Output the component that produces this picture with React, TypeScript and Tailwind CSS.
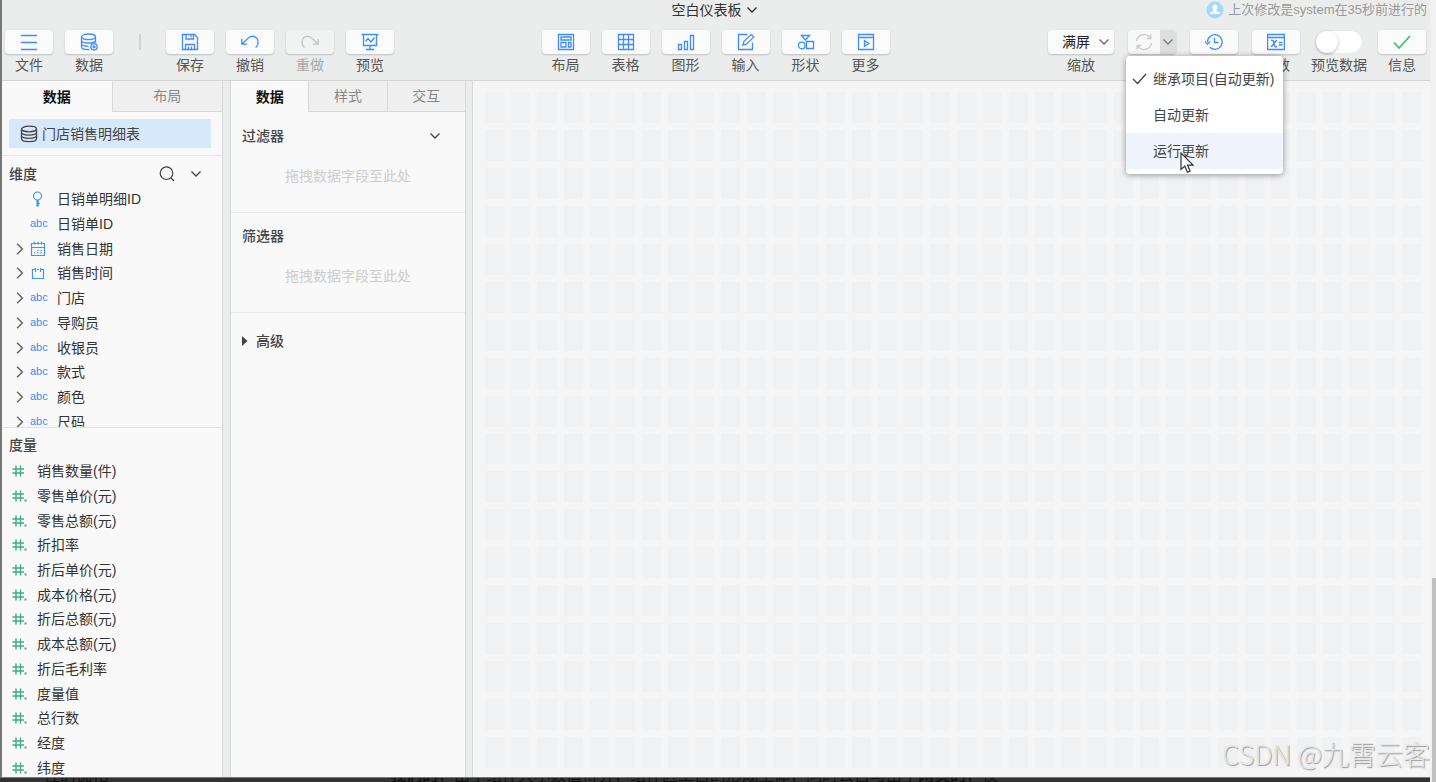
import React from 'react';

const DIMENSIONS = [
    { name: '日销单明细ID', type: 'key', expandable: false },
    { name: '日销单ID', type: 'text', expandable: false },
    { name: '销售日期', type: 'date', expandable: true },
    { name: '销售时间', type: 'time', expandable: true },
    { name: '门店', type: 'text', expandable: true },
    { name: '导购员', type: 'text', expandable: true },
    { name: '收银员', type: 'text', expandable: true },
    { name: '款式', type: 'text', expandable: true },
    { name: '颜色', type: 'text', expandable: true },
    { name: '尺码', type: 'text', expandable: true },
];

const MEASURES = [
    { name: '销售数量(件)', decimal: false },
    { name: '零售单价(元)', decimal: true },
    { name: '零售总额(元)', decimal: true },
    { name: '折扣率', decimal: true },
    { name: '折后单价(元)', decimal: true },
    { name: '成本价格(元)', decimal: true },
    { name: '折后总额(元)', decimal: true },
    { name: '成本总额(元)', decimal: true },
    { name: '折后毛利率', decimal: true },
    { name: '度量值', decimal: true },
    { name: '总行数', decimal: true },
    { name: '经度', decimal: true },
    { name: '纬度', decimal: true },
];

const GRID_CELLS = Array.from({ length: 36 * 18 }, (_, i) => i);

// 18px line icons for the toolbar
const Icon = ({ children, className = 'text-[#3f8cff]' }: { children: React.ReactNode, className?: string }) => (
    <svg viewBox="0 0 18 18" className={`w-[18px] h-[18px] shrink-0 ${className}`} fill="none" stroke="currentColor" strokeWidth="1.3" aria-hidden="true">
        {children}
    </svg>
);

const MenuIcon = () => <Icon><path d="M1 2.5h16M1 9.5h16M1 16.5h16" /></Icon>;

const DataSettingIcon = () => (
    <Icon>
        <ellipse cx="8.5" cy="3.8" rx="7" ry="2.8" />
        <path d="M1.5 3.8v10c0 1.6 3 2.9 7 2.9h1M15.5 3.8v6M1.5 7.2c0 1.6 3 2.8 7 2.8s7-1.2 7-2.8M1.5 10.6c0 1.6 3 2.8 7 2.8" />
        <circle cx="14" cy="13.8" r="3.2" />
        <circle cx="14" cy="13.8" r="1" />
    </Icon>
);

const SaveIcon = () => (
    <Icon>
        <path d="M1.5 1.5h12l3 3v12h-15zM5 1.5v4.5h7.5V1.5M10 2.5v2M4.5 16.5v-5h9v5M7.5 13.5v3M10.5 13.5v3" />
    </Icon>
);

const UndoIcon = () => <Icon><path d="M.8 6v5.2h5.4M1 11 7.5 4.9a6 6 0 0 1 7.5-.3c2.8 2.3 2.8 6.8-.3 10" /></Icon>;

const RedoIcon = () => (
    <Icon className="text-[#c4c4c4]">
        <path d="M17.2 6v5.2h-5.4M17 11 10.5 4.9A6 6 0 0 0 3 4.6C.2 6.9.2 11.4 3.3 14.6" />
    </Icon>
);

const PreviewIcon = () => (
    <Icon><path d="M.5 1.5h17M2.5 1.5v11h13v-11M9 12.5v4M5 16.5h8M4.5 8.5 7 5.5l3 3.5 3.5-4.5" /></Icon>
);

const LayoutIcon = () => (
    <Icon><path d="M1.5 1.5h15v15h-15zM4 4h10v3H4zM4 9.5h5v4.5H4zM11.5 9.5H14V14h-2.5z" /></Icon>
);

const TableIcon = () => <Icon><path d="M1.5 1.5h15v15h-15zM1.5 6.5h15M1.5 11.5h15M6.5 1.5v15M11.5 1.5v15" /></Icon>;

const ChartIcon = () => <Icon><path d="M1.5 11.5h3v5h-3zM7.5 8.5h3v8h-3zM13.5 2.5h3v14h-3z" /></Icon>;

const InputIcon = () => (
    <Icon>
        <path d="M10.5 1.5h-9v15h14v-7" />
        <path d="m6 12 .8-3.4 7.4-7 2.5 2.5-7.4 7z" />
    </Icon>
);

const ShapeIcon = () => (
    <Icon>
        <path d="M4.5 2.5h8L8.500 7zM9.5 8.5h7v7h-7z" />
        <circle cx="4.8" cy="12.5" r="3.3" />
    </Icon>
);

const MoreIcon = () => <Icon><path d="M1.5 1.5h15v15h-15zM1.5 4.5h15M7.5 7.8v5.4l4.3-2.7z" /></Icon>;

const RefreshIcon = () => (
    <Icon className="text-[#c9c9c9]">
        <path d="M1.5 8a7.5 7.5 0 0 1 13.7-3M16.5 10a7.5 7.5 0 0 1-13.7 3M15.8 1.5v4h-4M2.2 16.5v-4h4" />
    </Icon>
);

const HistoryIcon = () => (
    <Icon>
        <path d="M2.5 9a7.3 7.3 0 1 1 2.3 5.3M0 8.5l2.6 2.5L5.2 8.5M9.5 5v4.5h4" />
    </Icon>
);

const ParamIcon = () => (
    <Icon>
        <path d="M.6 1.5h16.8v15H.6zM.6 4.5h16.800" />
        <path d="M4 7.5c2-.6 2.5.3 3 2.8s1.2 4.2 3 3.2M10 7.5c-1.5 0-2 1.5-3 3s-1.6 3-3.2 3M11.8 9.5h3.7M11.8 12h3.7" strokeWidth="1.5" />
    </Icon>
);

const Chevron = ({ className = 'w-3 h-3' }: { className?: string }) => (
    <svg viewBox="0 0 12 12" className={`shrink-0 ${className}`} fill="none" stroke="currentColor" strokeWidth="1.3" aria-hidden="true">
        <path d="m1.5 3.5 4.5 4.5 4.5-4.5" />
    </svg>
);

const DatabaseIcon = () => (
    <Icon className="text-[#444]">
        <ellipse cx="9" cy="4" rx="7.5" ry="2.8" />
        <path d="M1.5 4v9.8c0 1.6 3.3 2.9 7.5 2.9s7.5-1.3 7.5-2.9V4M1.5 7.3c0 1.6 3.3 2.8 7.5 2.8s7.5-1.2 7.5-2.8M1.5 10.6c0 1.6 3.3 2.8 7.5 2.8s7.5-1.2 7.5-2.8" />
    </Icon>
);

const FieldIcon = ({ type }: { type: string }) => {
    if (type === 'text') {
        return <span className="text-[11px] text-[#3d8cf7]">abc</span>;
    }
    return (
        <svg viewBox="0 0 16 16" className="w-4 h-4 text-[#3d97f7]" fill="none" stroke="currentColor" strokeWidth="1.2" aria-hidden="true">
            {type === 'key' && (
                <>
                    <circle cx="7.500" cy="5" r="4" />
                    <path d="M7 9v6.5M8.2 9v6.5M8 12.5h2" />
                </>
            )}
            {type === 'date' && (
                <>
                    <path d="M1.500 2.500h13v12h-13zM1.500 6.500h13M4.500.500v3M8 .500v3M11.500.500v3" />
                    <path d="M4 11.800h1.200M7 9.500h1.500M7 11.800h1.500M10.500 9.500H12M10.500 11.800H12" />
                </>
            )}
            {type === 'time' && <path d="M5 4.500H2.500v9h11v-9H11M7 4.500h2M5.500 3v4M10.500 3v4" />}
        </svg>
    );
};

const ToolButton = ({ label, icon, disabled = false }: { label: string, icon: React.ReactNode, disabled?: boolean }) => (
    <button disabled={disabled} className="w-12 flex flex-col items-center gap-px">
        <span className={`w-full h-6 rounded flex items-center justify-center shadow-[0_1px_2px_rgba(0,0,0,0.2)] ${disabled ? 'bg-[#f1f2f2]' : 'bg-[#fbfbfb]'}`}>
            {icon}
        </span>
        <span className={`text-sm leading-5 ${disabled ? 'text-[#a8a8a8]' : 'text-[#555]'}`}>{label}</span>
    </button>
);

const UpdateMenu = () => (
    <div role="menu" className="absolute z-20 -left-0.5 top-[26px] w-[157px] py-[5px] bg-white rounded-sm shadow-[0_1px_6px_rgba(0,0,0,0.4)] text-sm text-[#444]">
        <button role="menuitem" className="w-full h-9 pl-1.5 flex items-center gap-1.5 whitespace-nowrap">
            <svg viewBox="0 0 15 12" className="w-[15px] h-3 shrink-0" fill="none" stroke="currentColor" strokeWidth="1.3" aria-hidden="true">
                <path d="m1 6 4.5 4.5L14 1" />
            </svg>
            继承项目(自动更新)
        </button>
        <button role="menuitem" className="w-full h-9 pl-[27px] text-left">自动更新</button>
        <button role="menuitem" className="w-full h-9 pl-[27px] text-left bg-[#f0f4fc]">运行更新</button>
        <svg viewBox="0 0 14 22" className="absolute left-[54px] top-24 w-3.5 h-[22px]" fill="#fff" stroke="#333" strokeWidth="1.2" aria-hidden="true">
            <path d="M1 1v16.500l3.800-3.500 2.600 6.300 2.700-1.200-2.600-6H13z" />
        </svg>
    </div>
);

const Header = () => (
    <header className="h-[81px] shrink-0 border-b border-[#d5d5d5] bg-[#ebedec]">
        <div className="h-[30px] flex items-start pr-[3px]">
            <div className="flex-1" />
            <button className="h-5 flex items-center gap-1 text-sm text-[#333]">
                空白仪表板
                <Chevron />
            </button>
            <div className="flex-1 h-5 flex items-center justify-end gap-1 text-[13px] text-[#999] whitespace-nowrap">
                <svg viewBox="0 0 18 18" className="w-[18px] h-[18px]" aria-hidden="true">
                    <circle cx="9" cy="9" r="8.5" fill="#a5d8fb" />
                    <path d="M9 3.500a2.800 2.800 0 0 1 1.500 5v1.500l3.500 1.500V13H4v-1.500L7.500 10V8.500A2.800 2.800 0 0 1 9 3.500z" fill="#fff" />
                </svg>
                上次修改是system在35秒前进行的
            </div>
        </div>
        <div className="flex items-start pl-[3px] pr-1">
            <div className="flex-1 flex">
                <div className="flex gap-3">
                    <ToolButton label="文件" icon={<MenuIcon />} />
                    <ToolButton label="数据" icon={<DataSettingIcon />} />
                </div>
                <div className="w-[53px] h-6 flex items-center justify-center">
                    <span className="w-0.5 h-4 bg-[#d3d5d4]" />
                </div>
                <div className="flex gap-3">
                    <ToolButton label="保存" icon={<SaveIcon />} />
                    <ToolButton label="撤销" icon={<UndoIcon />} />
                    <ToolButton label="重做" icon={<RedoIcon />} disabled />
                    <ToolButton label="预览" icon={<PreviewIcon />} />
                </div>
            </div>
            <div className="flex gap-3">
                <ToolButton label="布局" icon={<LayoutIcon />} />
                <ToolButton label="表格" icon={<TableIcon />} />
                <ToolButton label="图形" icon={<ChartIcon />} />
                <ToolButton label="输入" icon={<InputIcon />} />
                <ToolButton label="形状" icon={<ShapeIcon />} />
                <ToolButton label="更多" icon={<MoreIcon />} />
            </div>
            <div className="flex-1 flex justify-end gap-[11px]">
                <div className="flex gap-3.5">
                    <button className="w-[66px] flex flex-col items-center gap-px text-sm leading-5 text-[#555]">
                        <span className="w-full h-6 pl-3.5 pr-1 rounded flex items-center justify-between text-[#222] bg-[#fbfbfb] shadow-[0_1px_2px_rgba(0,0,0,0.2)]">
                            满屏
                            <Chevron className="w-3 h-3 text-[#666]" />
                        </span>
                        缩放
                    </button>
                    <div className="relative w-12">
                        <div className="h-6 rounded flex overflow-hidden bg-[#f8f8f8] shadow-[0_1px_2px_rgba(0,0,0,0.2)]">
                            <button aria-label="更新" className="flex-1 flex items-center justify-center"><RefreshIcon /></button>
                            <button aria-label="更新方式" className="w-4 flex items-center justify-center bg-[#dcdedd] text-[#777]"><Chevron /></button>
                        </div>
                        <UpdateMenu />
                    </div>
                    <ToolButton label="历史" icon={<HistoryIcon />} />
                    <ToolButton label="参数" icon={<ParamIcon />} />
                </div>
                <label className="w-14 flex flex-col items-center gap-px text-sm leading-5 text-[#555]">
                    <span className="h-6 flex items-center">
                        <input type="checkbox" role="switch" className="peer sr-only" />
                        <span className="w-[46px] h-[22px] rounded-full bg-white flex peer-checked:justify-end shadow-[0_0_1px_rgba(0,0,0,0.15)]">
                            <span className="w-[22px] h-[22px] rounded-full bg-white shadow-[0_1px_3px_rgba(0,0,0,0.3)]" />
                        </span>
                    </span>
                    预览数据
                </label>
                <ToolButton label="信息" icon={<Icon className="text-[#45bd6e]"><path d="m1 9.5 5 5.5L17 3" strokeWidth="1.8" /></Icon>} />
            </div>
        </div>
    </header>
);

const Tabs = ({ items }: { items: string[] }) => (
    <div role="tablist" className="h-[31px] shrink-0 flex text-sm">
        {items.map((item, i) => (
            <button
                key={item}
                role="tab"
                aria-selected={i === 0}
                className={i === 0
                    ? 'flex-1 font-bold text-[#111]'
                    : 'flex-1 bg-[#efefef] text-[#888] border-l border-b border-[#d8d8d8]'}
            >
                {item}
            </button>
        ))}
    </div>
);

const DataPanel = () => (
    <aside className="w-[221px] shrink-0 flex flex-col overflow-hidden bg-[#f9f9f9] border-r border-[#d8dad9]">
        <Tabs items={['数据', '布局']} />
        <div className="pl-[7px] pr-[11px] py-[7px] border-b border-[#e8e8e8]">
            <button className="w-full h-[29px] pl-[11px] flex items-center gap-1 bg-[#d8e8fb] text-sm text-[#444]">
                <DatabaseIcon />
                门店销售明细表
            </button>
        </div>
        <div className="h-[31px] shrink-0 pl-[7px] pr-5 pt-1 flex items-center text-sm text-[#444]">
            <h2 className="flex-1 font-medium">维度</h2>
            <button aria-label="搜索">
                <svg viewBox="0 0 16 16" className="w-4 h-4" fill="none" stroke="currentColor" strokeWidth="1.2" aria-hidden="true">
                    <circle cx="7.5" cy="7.2" r="6.3" />
                    <path d="m12 12 3 3" />
                </svg>
            </button>
            <button aria-label="更多" className="ml-[15px]"><Chevron /></button>
        </div>
        <div className="h-[241px] shrink-0 overflow-hidden border-b border-[#e3e3e3]">
            <ul className="h-[247px] grid auto-rows-fr text-sm text-[#333]">
                {DIMENSIONS.map(dim => (
                    <li key={dim.name} className="flex items-center">
                        <span className="w-7 pl-[11px] text-[#666]">
                            {dim.expandable && <Chevron className="w-3.5 h-3.5 -rotate-90" />}
                        </span>
                        <span className="w-[27px] flex items-center"><FieldIcon type={dim.type} /></span>
                        {dim.name}
                    </li>
                ))}
            </ul>
        </div>
        <h2 className="h-[31px] shrink-0 pl-[7px] pt-0.5 flex items-center text-sm font-medium text-[#444]">度量</h2>
        <ul className="h-[321px] shrink-0 grid auto-rows-fr text-sm text-[#333]">
            {MEASURES.map(measure => (
                <li key={measure.name} className="flex items-center pl-[10px]">
                    <svg viewBox="0 0 16 14" className="w-4 h-3.5 mr-[9px] text-[#3fae7c]" fill="none" stroke="currentColor" strokeWidth="1.4" aria-hidden="true">
                        <path d="M.5 5h11.500M.5 9h11.500M4 1.500v11M8.500 1.500v11" />
                        {measure.decimal && <path d="M12.500 11.500h2" strokeWidth="2" />}
                    </svg>
                    {measure.name}
                </li>
            ))}
        </ul>
    </aside>
);

const DropSection = ({ title, menu = false }: { title: string, menu?: boolean }) => (
    <section className="h-[100px] shrink-0 pt-[13px] border-b border-[#e6e6e6] text-sm">
        <div className="h-5 pl-[11px] pr-6 flex items-center justify-between text-[#444]">
            <h2 className="font-medium">{title}</h2>
            {menu && <button aria-label="更多"><Chevron /></button>}
        </div>
        <p className="pt-5 text-center leading-5 text-[#cdcdcd]">拖拽数据字段至此处</p>
    </section>
);

const BindingPanel = () => (
    <aside className="w-[236px] shrink-0 ml-[7px] flex flex-col bg-[#f9f9f9] border-x border-[#d8dad9]">
        <Tabs items={['数据', '样式', '交互']} />
        <div className="pt-px">
            <DropSection title="过滤器" menu />
            <DropSection title="筛选器" />
        </div>
        <button className="mt-[18px] h-5 pl-[11px] flex items-center gap-2 text-sm font-medium text-[#444]">
            <svg viewBox="0 0 6 10" className="w-1.5 h-2.5" fill="currentColor" aria-hidden="true"><path d="M0 0v10l5.500-5z" /></svg>
            高级
        </button>
    </aside>
);

const Canvas = () => (
    <main className="flex-1 ml-1.5 pl-3 pr-[9px] pt-[11px] pb-[9px] border-l border-[#d8dad9] bg-[#f5f5f5] grid grid-cols-[repeat(36,minmax(0,1fr))] grid-rows-[repeat(18,minmax(0,1fr))] gap-[7px]">
        {GRID_CELLS.map(i => <div key={i} className="bg-[#f0f1f3]" />)}
    </main>
);

export default function App() {
    return (
        <div className="relative h-screen flex overflow-hidden bg-[#ebedec] font-['Liberation_Sans','Noto_Sans_CJK_SC',sans-serif]">
            <div className="flex-1 min-w-0 flex flex-col">
                <div className="flex-1 min-h-0 flex flex-col border-l-2 border-[#777]">
                    <Header />
                    <div className="flex-1 min-h-0 flex">
                        <DataPanel />
                        <BindingPanel />
                        <Canvas />
                    </div>
                </div>
                <footer className="h-[5px] shrink-0 flex items-end overflow-hidden border-t border-[#777] bg-[#333] text-base leading-3 text-[#111] whitespace-nowrap">
                    <span className="w-[390px] pl-11">性的优化</span>
                    <span><b>我们的</b>，由于组件大小数值得分，组件区工自的形成主体，同时公自与由于<b>网页的</b>，仅</span>
                </footer>
            </div>
            <div className="w-1.5 shrink-0 flex flex-col justify-end items-end bg-[#f1f1f1]">
                <div className="w-1 h-[204px] bg-[#c1c1c1]" />
            </div>
            <div className="absolute right-1.5 bottom-2.5 text-[27px] leading-9 font-light text-[#e6e6e6] [text-shadow:1px_1px_1px_#999] whitespace-nowrap font-['Noto_Sans_CJK_SC',sans-serif]">
                CSDN @九霄云客
            </div>
        </div>
    );
}
